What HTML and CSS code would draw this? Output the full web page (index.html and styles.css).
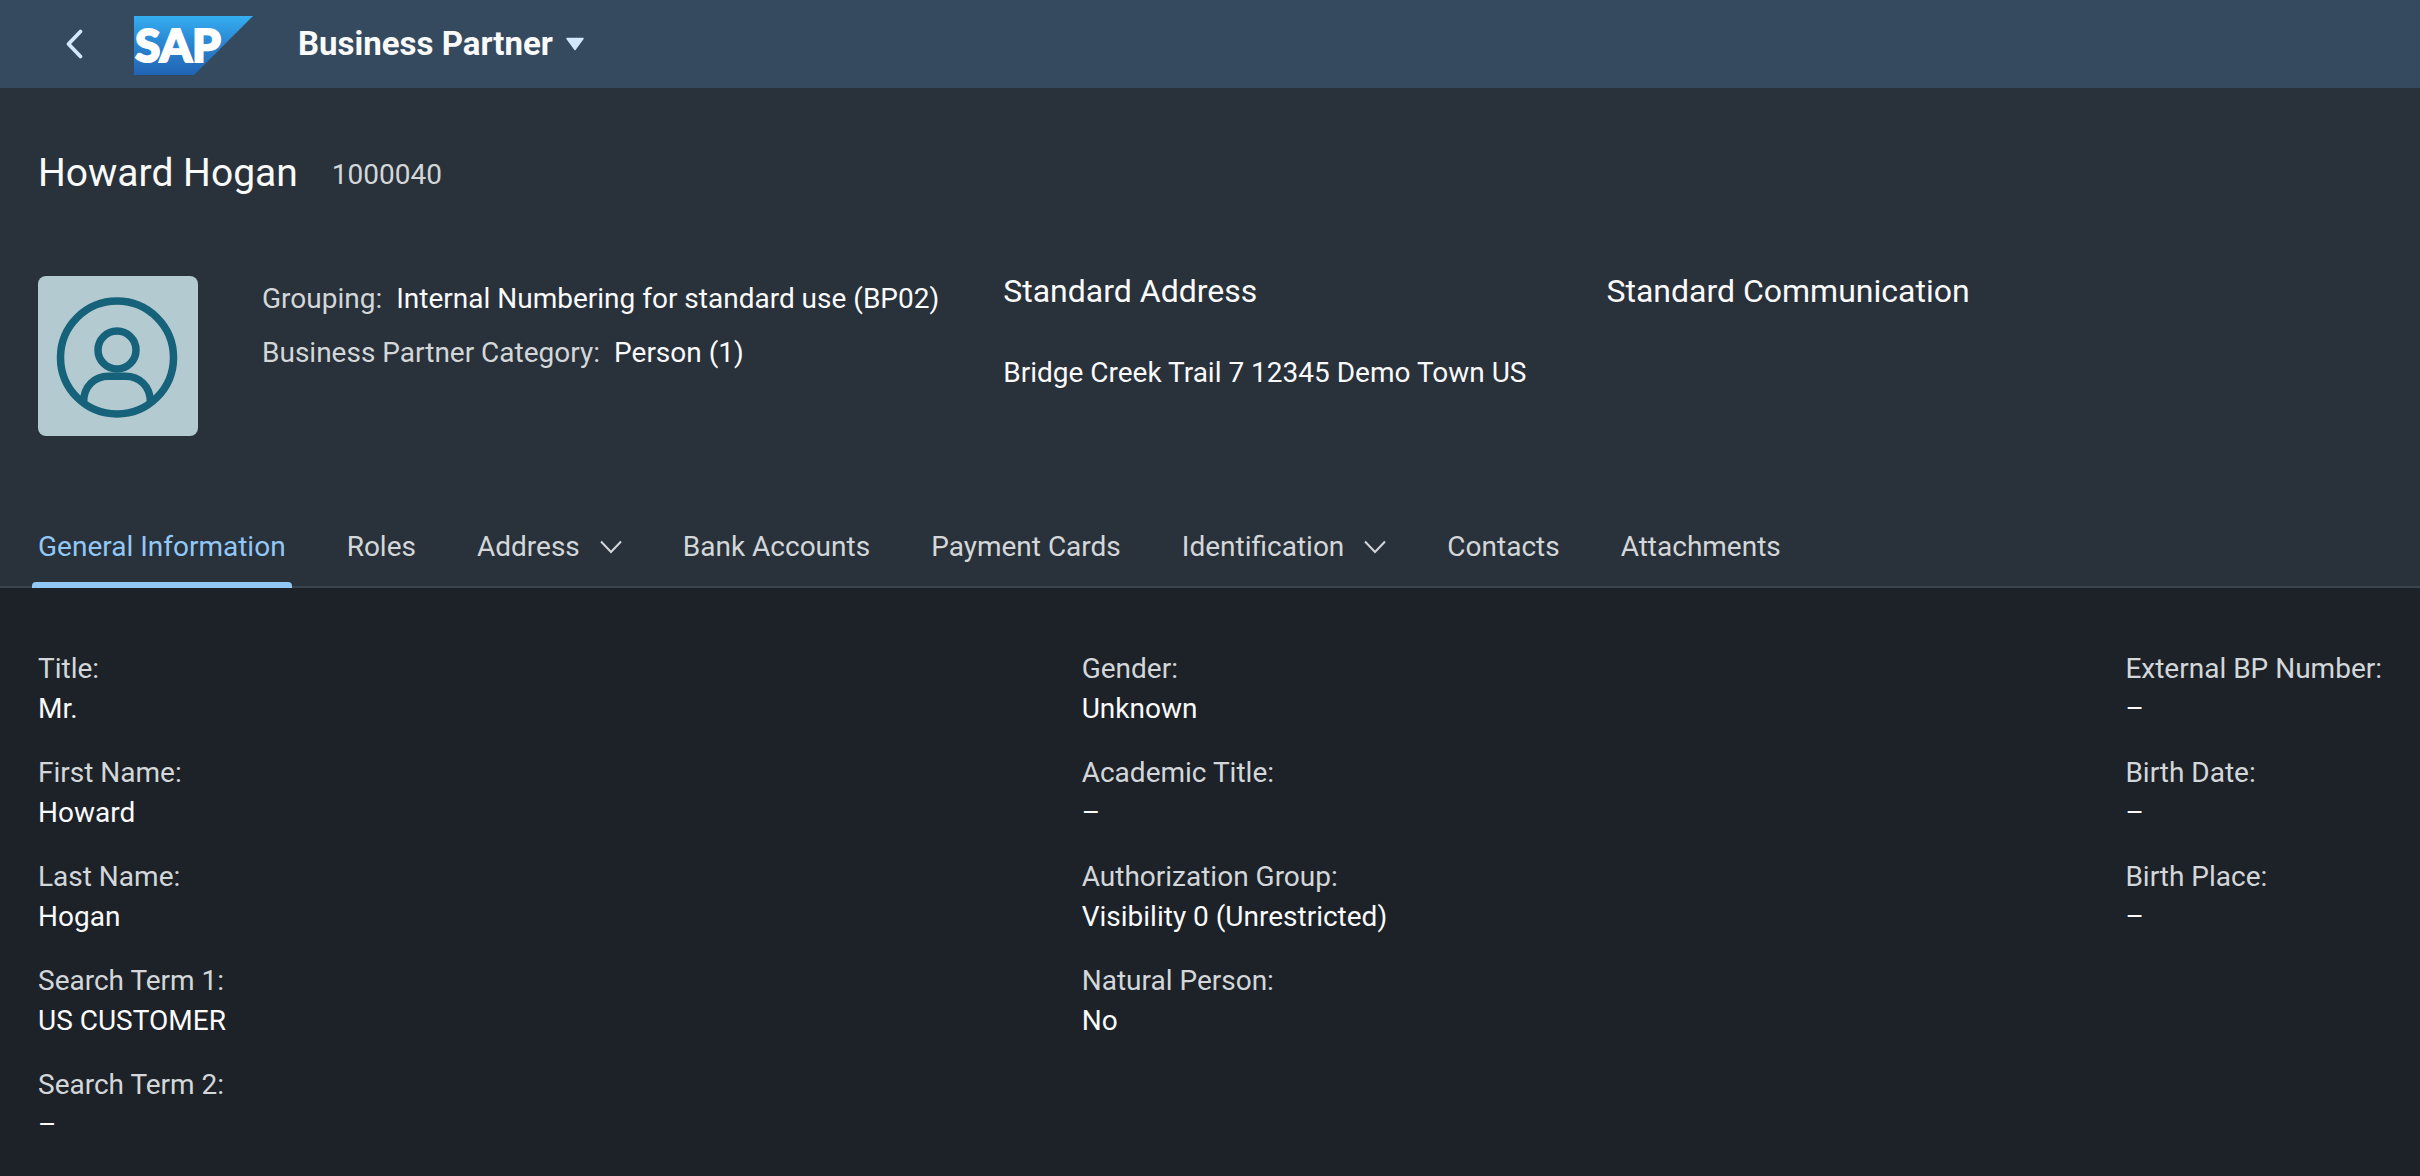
FILE: index.html
```html
<!DOCTYPE html>
<html lang="en">
<head>
<meta charset="utf-8">
<meta name="viewport" content="width=device-width, initial-scale=1">
<title>Business Partner</title>
<link rel="stylesheet" href="styles.css">
</head>
<body>
<header class="shell">
  <button class="shell-back" type="button" aria-label="Back">
    <svg width="20" height="32" viewBox="0 0 20 32" aria-hidden="true"><path d="M16.500 3.500 4.500 16l12 12.500" fill="none" stroke="currentColor" stroke-width="3.800" stroke-linecap="round" stroke-linejoin="round"/></svg>
  </button>
  <a class="shell-logo" href="#" aria-label="SAP home">
    <svg width="119" height="59" viewBox="0 0 119 59" aria-hidden="true">
      <defs><linearGradient id="logo-fill" x1="0" y1="0" x2="0" y2="1"><stop offset="0" stop-color="#35aef2"/><stop offset=".4" stop-color="#2b8bd6"/><stop offset="1" stop-color="#2263b4"/></linearGradient></defs>
      <path d="M0 0h119L60 59H0z" fill="url(#logo-fill)"/>
      <text class="logo-text" x="1" y="46">SAP</text>
    </svg>
  </a>
  <button class="shell-title" type="button">Business Partner
    <svg width="20" height="14" viewBox="0 0 20 14" aria-hidden="true"><path d="M2 1.500h16L10 12.500z" fill="#d1e8ff" stroke="#d1e8ff" stroke-width="1.500" stroke-linejoin="round"/></svg>
  </button>
</header>

<section class="object-header">
  <div class="object-title">
    <h1>Howard Hogan</h1>
    <span class="object-id">1000040</span>
  </div>
  <div class="facets">
    <svg class="avatar" width="160" height="160" viewBox="0 0 160 160" role="img" aria-label="Person">
      <rect width="160" height="160" rx="8" fill="#b3cbd0"/>
      <g fill="none" stroke="#16627a" stroke-width="7.500">
        <circle cx="79" cy="81.500" r="56.500"/>
        <circle cx="79" cy="74" r="19"/>
        <path d="M45.500 126.500C45.500 110 57 100.200 70.500 100.200h17C101 100.200 112.500 110 112.500 126.500"/>
      </g>
    </svg>
    <dl class="facet-list">
      <div><dt>Grouping:</dt><dd>Internal Numbering for standard use (BP02)</dd></div>
      <div><dt>Business Partner Category:</dt><dd>Person (1)</dd></div>
    </dl>
    <div class="facet">
      <h2>Standard Address</h2>
      <p>Bridge Creek Trail 7 12345 Demo Town US</p>
    </div>
    <div class="facet">
      <h2>Standard Communication</h2>
    </div>
  </div>
  <nav class="tabs" aria-label="Sections">
    <a class="tab tab-active" href="#general" aria-current="true">General Information</a>
    <a class="tab" href="#roles">Roles</a>
    <a class="tab" href="#address">Address <svg width="22" height="14" viewBox="0 0 22 14" aria-hidden="true"><path d="M1 1.500 11 12 21 1.500"/></svg></a>
    <a class="tab" href="#bank">Bank Accounts</a>
    <a class="tab" href="#cards">Payment Cards</a>
    <a class="tab" href="#identification">Identification <svg width="22" height="14" viewBox="0 0 22 14" aria-hidden="true"><path d="M1 1.500 11 12 21 1.500"/></svg></a>
    <a class="tab" href="#contacts">Contacts</a>
    <a class="tab" href="#attachments">Attachments</a>
  </nav>
</section>

<main class="form" id="general">
  <dl class="form-column">
    <div><dt>Title:</dt><dd>Mr.</dd></div>
    <div><dt>First Name:</dt><dd>Howard</dd></div>
    <div><dt>Last Name:</dt><dd>Hogan</dd></div>
    <div><dt>Search Term 1:</dt><dd>US CUSTOMER</dd></div>
    <div><dt>Search Term 2:</dt><dd>–</dd></div>
  </dl>
  <dl class="form-column">
    <div><dt>Gender:</dt><dd>Unknown</dd></div>
    <div><dt>Academic Title:</dt><dd>–</dd></div>
    <div><dt>Authorization Group:</dt><dd>Visibility 0 (Unrestricted)</dd></div>
    <div><dt>Natural Person:</dt><dd>No</dd></div>
  </dl>
  <dl class="form-column">
    <div><dt>External BP Number:</dt><dd>–</dd></div>
    <div><dt>Birth Date:</dt><dd>–</dd></div>
    <div><dt>Birth Place:</dt><dd>–</dd></div>
  </dl>
</main>
</body>
</html>
```
FILE: styles.css
```css
* {
  box-sizing: border-box;
}

body {
  margin: 0;
  background: #1d2229;
  color: #fafafa;
  font: 28px/40px Roboto, "Liberation Sans", sans-serif;
}

h1, h2, p, dl, dd {
  margin: 0;
}

button {
  padding: 0;
  border: 0;
  background: none;
  color: inherit;
  font: inherit;
}

a {
  color: inherit;
  text-decoration: none;
}

svg {
  display: block;
  flex: none;
}

/* Shell bar */
.shell {
  display: flex;
  align-items: center;
  height: 88px;
  padding: 0 64px;
  background: #354a5f;
}

.shell-back {
  color: #d1e8ff;
}

.shell-logo {
  margin: 2px 45px 0 50px;
}

.logo-text {
  fill: #fff;
  stroke: #fff;
  stroke-width: 2px;
  font: 900 46px Lato, "Open Sans", sans-serif;
}

.shell-title {
  display: flex;
  align-items: center;
  gap: 12px;
  font-size: 33px;
  font-weight: 700;
}

/* Object header */
.object-header {
  background: #29313a;
  border-bottom: 2px solid #3a444f;
}

.object-title {
  display: flex;
  align-items: flex-end;
  gap: 34px;
  padding: 61px 38px 0;
}

h1 {
  font-size: 39px;
  font-weight: 400;
  line-height: 48px;
}

.object-id {
  color: #d3d7d9;
  line-height: 44px;
}

.facets {
  display: flex;
  gap: 64px;
  padding: 75px 38px 70px;
}

.avatar {
  margin-top: 4px;
}

.facet-list {
  line-height: 54px;
}

.facet-list > div {
  display: flex;
  gap: 14px;
}

dt {
  color: #d3d7d9;
}

.facet {
  padding-right: 16px;
}

h2 {
  margin-bottom: 43px;
  font-size: 32px;
  font-weight: 400;
  line-height: 38px;
}

/* Section tabs */
.tabs {
  display: flex;
  gap: 49px;
  padding: 0 32px;
  margin-bottom: -2px;
  color: #d3d7d9;
  line-height: 82px;
}

.tab {
  position: relative;
  display: flex;
  align-items: center;
  gap: 20px;
  padding: 0 6px;
}

.tab svg {
  fill: none;
  stroke: currentColor;
  stroke-width: 2px;
}

.tab-active {
  color: #91c8f6;
}

.tab-active::after {
  content: "";
  position: absolute;
  right: 0;
  bottom: 0;
  left: 0;
  height: 6px;
  border-radius: 4px 4px 0 0;
  background: currentColor;
}

/* Form */
.form {
  display: grid;
  grid-template-columns: 1fr 1fr auto;
  padding: 61px 38px 47px;
}

.form-column {
  display: flex;
  flex-direction: column;
  gap: 24px;
}
```
